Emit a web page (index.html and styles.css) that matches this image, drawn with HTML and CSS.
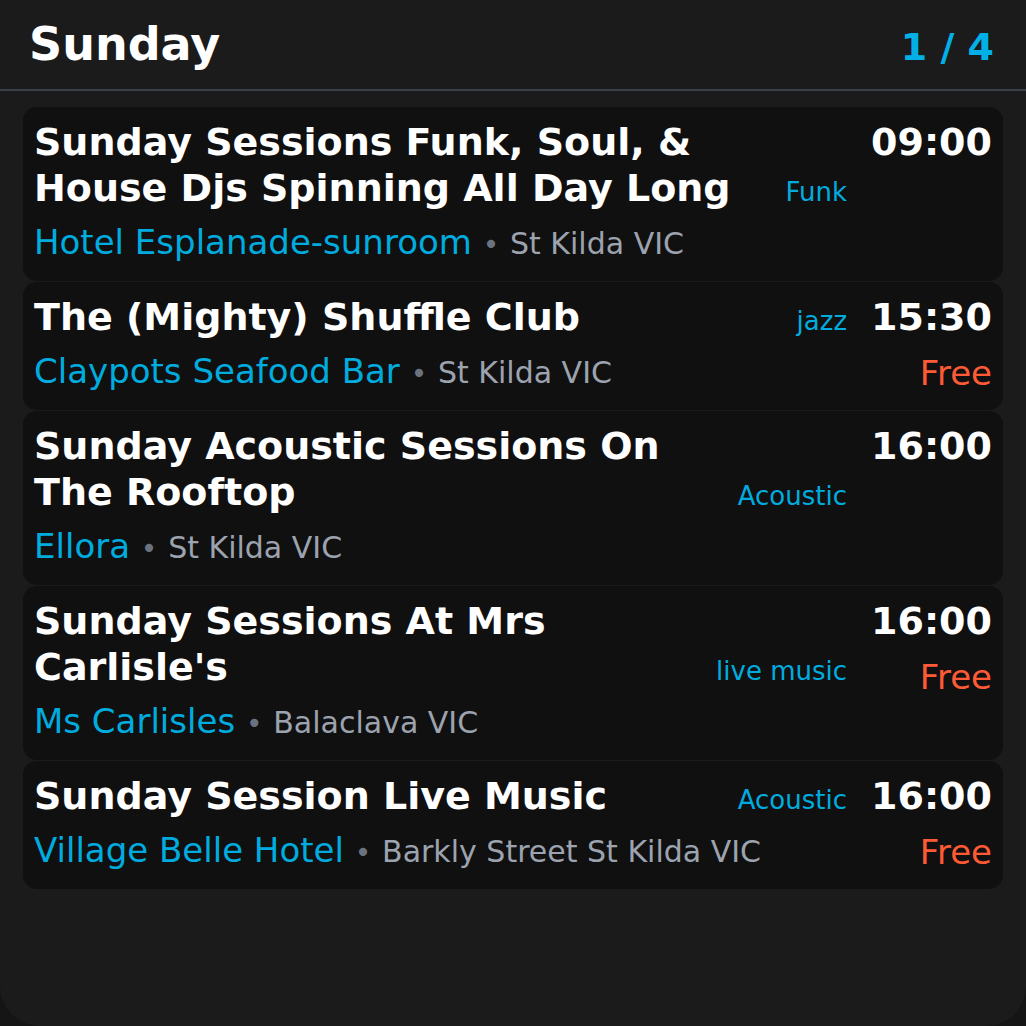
FILE: index.html
```html
<!DOCTYPE html>
<html>
<head>
<meta charset="utf-8">
<link rel="stylesheet" href="styles.css">
</head>
<body>
<div class="screen">
  <header class="top">
    <h1 class="day">Sunday</h1>
    <div class="page">1 / 4</div>
  </header>
  <main class="list">
    <div class="card">
      <div class="main">
        <div class="head">
          <div class="title">Sunday Sessions Funk, Soul, &amp; House Djs Spinning All Day Long</div>
          <div class="genre">Funk</div>
        </div>
        <div class="place"><span class="venue">Hotel Esplanade-sunroom</span> <span class="dot">•</span> <span class="sub">St Kilda VIC</span></div>
      </div>
      <div class="side">
        <div class="time">09:00</div>
      </div>
    </div>
    <div class="card">
      <div class="main">
        <div class="head">
          <div class="title">The (Mighty) Shuffle Club</div>
          <div class="genre">jazz</div>
        </div>
        <div class="place"><span class="venue">Claypots Seafood Bar</span> <span class="dot">•</span> <span class="sub">St Kilda VIC</span></div>
      </div>
      <div class="side">
        <div class="time">15:30</div>
        <div class="price">Free</div>
      </div>
    </div>
    <div class="card">
      <div class="main">
        <div class="head">
          <div class="title">Sunday Acoustic Sessions On The Rooftop</div>
          <div class="genre">Acoustic</div>
        </div>
        <div class="place"><span class="venue">Ellora</span> <span class="dot">•</span> <span class="sub">St Kilda VIC</span></div>
      </div>
      <div class="side">
        <div class="time">16:00</div>
      </div>
    </div>
    <div class="card">
      <div class="main">
        <div class="head">
          <div class="title">Sunday Sessions At Mrs Carlisle's</div>
          <div class="genre">live music</div>
        </div>
        <div class="place"><span class="venue">Ms Carlisles</span> <span class="dot">•</span> <span class="sub">Balaclava VIC</span></div>
      </div>
      <div class="side">
        <div class="time">16:00</div>
        <div class="price">Free</div>
      </div>
    </div>
    <div class="card">
      <div class="main">
        <div class="head">
          <div class="title">Sunday Session Live Music</div>
          <div class="genre">Acoustic</div>
        </div>
        <div class="place"><span class="venue">Village Belle Hotel</span> <span class="dot">•</span> <span class="sub">Barkly Street St Kilda VIC</span></div>
      </div>
      <div class="side">
        <div class="time">16:00</div>
        <div class="price">Free</div>
      </div>
    </div>
  </main>
</div>
</body>
</html>
```
FILE: styles.css
```css
html, body {
  margin: 0;
  padding: 0;
  background: #151515;
}
body {
  font-family: "DejaVu Sans", sans-serif;
  color: #ffffff;
}
.screen {
  width: 1026px;
  height: 1026px;
  box-sizing: border-box;
  background: #1b1b1b;
  border-radius: 0 0 40px 40px;
  overflow: hidden;
}
.top {
  display: flex;
  justify-content: space-between;
  align-items: baseline;
  padding: 17px 32px 18px 29px;
  border-bottom: 2px solid #3a3f4a;
}
.day {
  margin: 0;
  font-size: 46px;
  line-height: 54px;
  font-weight: bold;
}
.page {
  font-size: 38px;
  font-weight: bold;
  color: #00b0e6;
}
.list {
  display: flex;
  flex-direction: column;
  gap: 1px;
  padding: 16px 23px 0;
}
.card {
  display: flex;
  gap: 24px;
  background: #101010;
  border-radius: 14px;
  padding: 12px 11px 15px;
}
.main {
  flex: 1;
  min-width: 0;
  display: flex;
  flex-direction: column;
  gap: 10px;
}
.head {
  display: flex;
  align-items: last baseline;
  gap: 24px;
}
.title {
  flex: 1;
  font-size: 38px;
  line-height: 46px;
  font-weight: bold;
}
.genre {
  flex-shrink: 0;
  font-size: 26px;
  color: #00acdf;
}
.place {
  font-size: 34px;
  line-height: 43px;
  white-space: nowrap;
}
.venue {
  color: #00acdf;
}
.dot {
  color: #6b7280;
  font-size: 28px;
}
.sub {
  color: #9ca3af;
  font-size: 30px;
}
.side {
  display: flex;
  flex-direction: column;
  align-items: flex-end;
  gap: 12px;
}
.time {
  font-size: 38px;
  line-height: 46px;
  font-weight: bold;
}
.price {
  font-size: 34px;
  line-height: 43px;
  color: #ff5a36;
}
```
